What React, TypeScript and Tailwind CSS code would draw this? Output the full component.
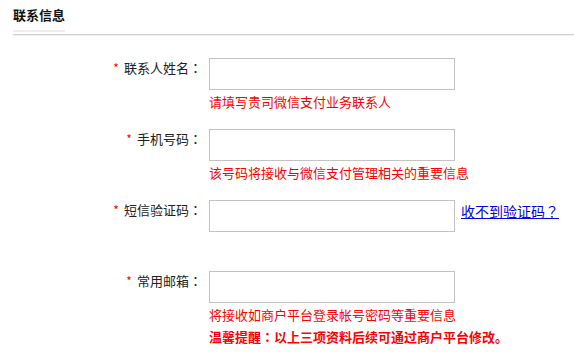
import React from "react";

type Row = {
    label: string;
    hint?: string;
    link?: string;
};

const rows: Row[] = [
    { label: "联系人姓名", hint: "请填写贵司微信支付业务联系人" },
    { label: "手机号码", hint: "该号码将接收与微信支付管理相关的重要信息" },
    { label: "短信验证码", link: "收不到验证码" },
    { label: "常用邮箱", hint: "将接收如商户平台登录帐号密码等重要信息" },
];

// centred full-width punctuation, as in the screenshot
const Punct: React.FC<{ children: React.ReactNode }> = ({ children }) => (
    <span style={{ fontFamily: '"Noto Sans CJK TC", sans-serif' }}>{children}</span>
);

const FormRow: React.FC<{ row: Row; last?: boolean }> = ({ row, last }) => {
    return (
        <div className="flex">
            <div className="w-[202px] shrink-0 text-right text-[13px] leading-[18px] pt-[1px] text-[#222]">
                <span className="text-[#f00] text-[12px] mr-[5px]">*</span>
                {row.label}
                <Punct>：</Punct>
            </div>
            <div className="ml-[7px] flex flex-col">
                <div className="flex items-start">
                    <input
                        className="w-[246px] h-[32px] border border-[#c3c3c3] bg-white outline-none"
                        type="text"
                    />
                    {row.link && (
                        <a href="#" className="ml-[6px] mt-[2px] text-[14px] leading-[18px] text-[#0000ee] underline">
                            {row.link}
                            <Punct>？</Punct>
                        </a>
                    )}
                </div>
                <p className="mt-[2px] h-[20px] text-[13px] leading-[20px] text-[#f00] whitespace-nowrap">
                    {row.hint ?? ""}
                </p>
                {last && (
                    <p className="mt-[2px] text-[13px] leading-[20px] font-bold text-[#f00] whitespace-nowrap">
                        温馨提醒<Punct>：</Punct>以上三项资料后续可通过商户平台修改。
                    </p>
                )}
            </div>
        </div>
    );
};

const App: React.FC = () => {
    return (
        <div
            className="w-[574px] h-[361px] bg-white overflow-hidden"
            style={{ fontFamily: '"Noto Sans CJK SC", "Noto Sans", sans-serif' }}
        >
            <div className="ml-[13px] pt-[5px]">
                <h3 className="w-fit text-[13px] font-bold leading-[20px] text-[#111] pb-[5px] border-b-2 border-[#eee]">
                    联系信息
                </h3>
                <div className="mt-[2px] h-px bg-[#cfcfcf]"></div>
                <div className="h-px bg-[#f2f2f2]"></div>
            </div>

            <div className="mt-[22px] flex flex-col gap-[17px]">
                {rows.map((row, i) => (
                    <FormRow key={row.label} row={row} last={i === rows.length - 1} />
                ))}
            </div>
        </div>
    );
};

export default App;
